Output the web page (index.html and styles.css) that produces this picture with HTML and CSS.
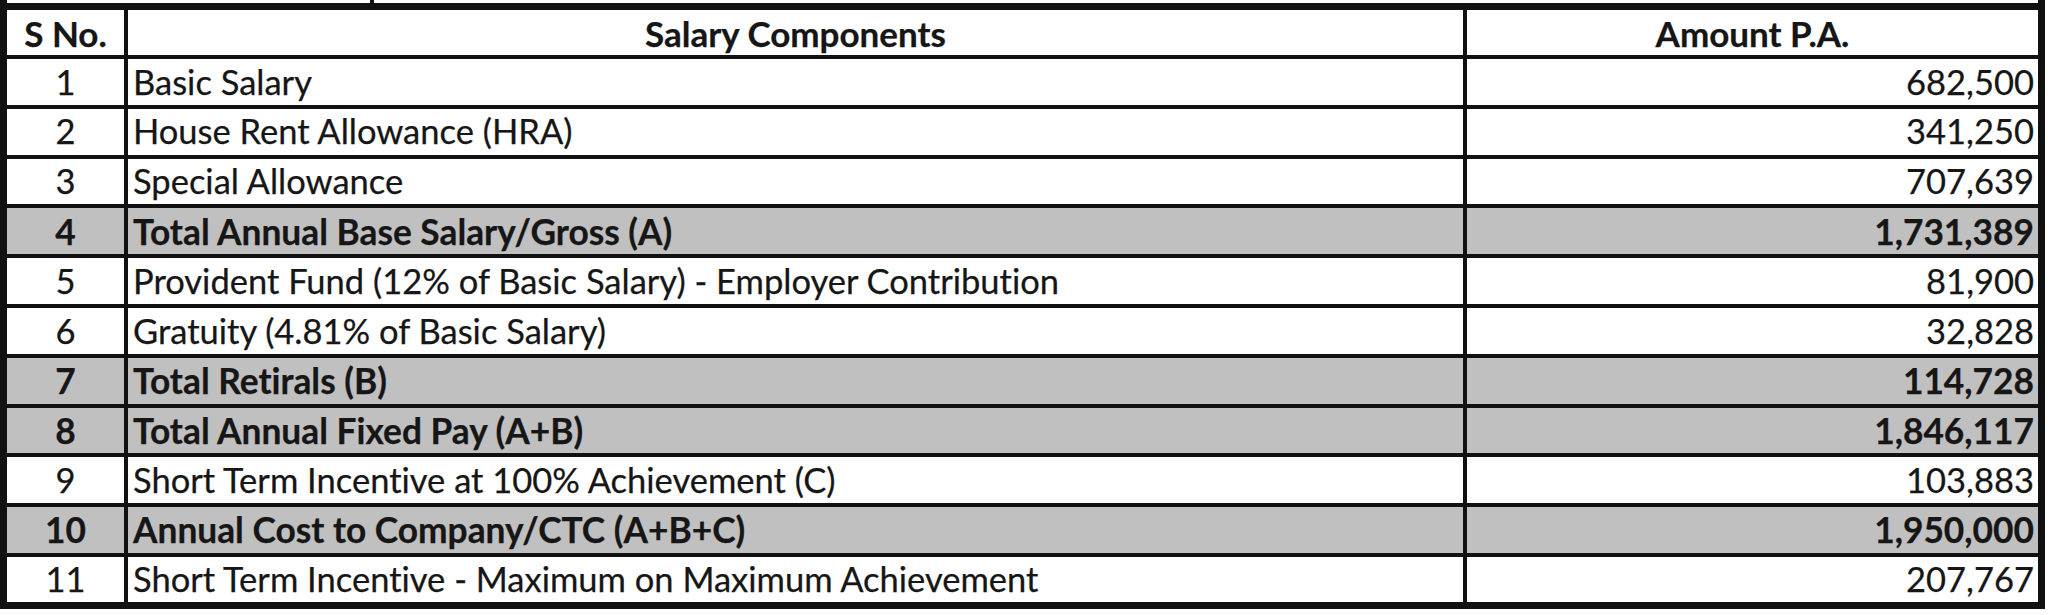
FILE: index.html
```html
<!DOCTYPE html>
<html lang="en">
<head>
<meta charset="utf-8">
<title>Salary Components</title>
<link rel="stylesheet" href="styles.css">
</head>
<body>
<div class="sheet">
  <div class="prev-strip">
    <div class="prev-cell prev-first"></div>
    <div class="prev-cell prev-rest"></div>
  </div>
  <table class="salary">
    <thead>
      <tr class="head">
        <th class="c-no">S No.</th>
        <th class="c-name">Salary Components</th>
        <th class="c-amt">Amount P.A.</th>
      </tr>
    </thead>
    <tbody>
      <tr><td class="c-no">1</td><td class="c-name">Basic Salary</td><td class="c-amt">682,500</td></tr>
      <tr><td class="c-no">2</td><td class="c-name">House Rent Allowance (HRA)</td><td class="c-amt">341,250</td></tr>
      <tr><td class="c-no">3</td><td class="c-name">Special Allowance</td><td class="c-amt">707,639</td></tr>
      <tr class="total"><td class="c-no">4</td><td class="c-name">Total Annual Base Salary/Gross (A)</td><td class="c-amt">1,731,389</td></tr>
      <tr><td class="c-no">5</td><td class="c-name">Provident Fund (12% of Basic Salary) - Employer Contribution</td><td class="c-amt">81,900</td></tr>
      <tr><td class="c-no">6</td><td class="c-name">Gratuity (4.81% of Basic Salary)</td><td class="c-amt">32,828</td></tr>
      <tr class="total"><td class="c-no">7</td><td class="c-name">Total Retirals (B)</td><td class="c-amt">114,728</td></tr>
      <tr class="total"><td class="c-no">8</td><td class="c-name">Total Annual Fixed Pay (A+B)</td><td class="c-amt">1,846,117</td></tr>
      <tr><td class="c-no">9</td><td class="c-name">Short Term Incentive at 100% Achievement (C)</td><td class="c-amt">103,883</td></tr>
      <tr class="total"><td class="c-no">10</td><td class="c-name">Annual Cost to Company/CTC (A+B+C)</td><td class="c-amt">1,950,000</td></tr>
      <tr class="last"><td class="c-no">11</td><td class="c-name">Short Term Incentive - Maximum on Maximum Achievement</td><td class="c-amt">207,767</td></tr>
    </tbody>
  </table>
</div>
</body>
</html>
```

FILE: styles.css
```css
html, body {
  margin: 0;
  padding: 0;
  background: #ffffff;
}

.sheet {
  width: 2048px;
  height: 615px;
  background: #ffffff;
  font-family: "Lato", "Liberation Sans", sans-serif;
  font-variant-ligatures: none;
  color: #161616;
}

.prev-strip {
  display: flex;
  height: 3px;
  width: 2045px;
}

.prev-cell {
  height: 3px;
  box-sizing: border-box;
}

.prev-first {
  width: 374px;
  border-left: 7px solid #111;
  border-right: 4px solid #111;
}

.prev-rest {
  flex: 1;
  border-right: 7px solid #111;
}

.salary {
  width: 2045px;
  table-layout: fixed;
  border-collapse: separate;
  border-spacing: 0;
  border: 7px solid #111;
  box-sizing: border-box;
}

.salary th,
.salary td {
  box-sizing: border-box;
  padding: 0;
  border-bottom: 4px solid #111;
  font-size: 34.5px;
  line-height: 1;
  white-space: nowrap;
  vertical-align: middle;
  overflow: visible;
  -webkit-text-stroke: 0.25px #161616;
}

.salary th:not(:last-child),
.salary td:not(:last-child) {
  border-right: 4px solid #111;
}

.salary .head {
  height: 49px;
}

.salary th {
  font-weight: 700;
  font-size: 35px;
  padding-top: 2px;
}

.salary tbody tr {
  height: 49.8px;
}

.salary tbody tr.last {
  height: 45px;
}

.salary tbody tr.last td {
  border-bottom: 0;
}

.c-no {
  width: 121px;
  text-align: center;
}

.c-name {
  width: 1339px;
  text-align: left;
}

th.c-name {
  text-align: center;
}

.salary td.c-name {
  padding-left: 5px;
}

.c-amt {
  text-align: right;
}

th.c-amt {
  text-align: center;
}

.salary td.c-amt {
  padding-right: 4px;
}

.salary tr.total td {
  background: #c0c0c0;
  font-weight: 700;
  font-size: 35.3px;
}
```
